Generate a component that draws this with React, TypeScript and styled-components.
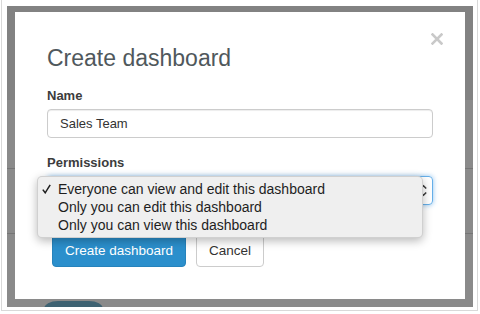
import React from 'react';
import { styled, createGlobalStyle } from 'styled-components';

const GlobalStyle = createGlobalStyle`
  html, body {
    margin: 0;
    padding: 0;
    background: #fff;
  }
  body {
    font-family: "Liberation Sans", Arial, sans-serif;
    width: 480px;
    height: 314px;
    overflow: hidden;
  }
`;

const permissionOptions = [
  'Everyone can view and edit this dashboard',
  'Only you can edit this dashboard',
  'Only you can view this dashboard',
];

function CloseIcon() {
  return (
    <svg width="12" height="12" viewBox="0 0 12 12">
      <path d="M1.5 1.5 L10.5 10.5 M10.5 1.5 L1.5 10.5" stroke="#c9c9c9" strokeWidth="2.6" strokeLinecap="square" />
    </svg>
  );
}

function CheckIcon() {
  return (
    <svg width="9" height="10" viewBox="0 0 9 10">
      <path d="M0.8 5.6 L3.2 8.8 L8.2 0.8" fill="none" stroke="#1e1e1e" strokeWidth="1.5" />
    </svg>
  );
}

function SelectArrows() {
  return (
    <svg width="7" height="13" viewBox="0 0 7 13">
      <path d="M0.8 4.6 L3.5 1.8 L6.2 4.6" fill="none" stroke="#3a3a3a" strokeWidth="1.5" />
      <path d="M0.8 8.4 L3.5 11.2 L6.2 8.4" fill="none" stroke="#3a3a3a" strokeWidth="1.5" />
    </svg>
  );
}

function App() {
  const [name, setName] = React.useState('Sales Team');
  const [permission] = React.useState(0);

  return (
    <>
      <GlobalStyle />
      <StyledFrame>
        <StyledWindow>
          {/* page behind the dialog */}
          <StyledPage>
            <StyledPageHeader />
            <StyledPageRow $height={68} />
            <StyledPageRow $height={64} />
            <StyledPageFooter>
              <StyledBlob />
            </StyledPageFooter>
          </StyledPage>

          {/* dialog */}
          <StyledBackdrop>
            <StyledModal>
              <StyledClose aria-label="Close">
                <CloseIcon />
              </StyledClose>
              <StyledTitle>Create dashboard</StyledTitle>

              <StyledFormGroup>
                <StyledLabel>Name</StyledLabel>
                <StyledInput value={name} onChange={(e) => setName(e.target.value)} />
              </StyledFormGroup>

              <StyledFormGroup>
                <StyledLabel>Permissions</StyledLabel>
                <StyledSelect>
                  <StyledSelectValue>{permissionOptions[permission]}</StyledSelectValue>
                  <SelectArrows />
                  <StyledMenu>
                    {permissionOptions.map((opt, i) => (
                      <StyledMenuItem key={opt}>
                        <StyledCheck>{i === permission && <CheckIcon />}</StyledCheck>
                        {opt}
                      </StyledMenuItem>
                    ))}
                  </StyledMenu>
                </StyledSelect>
              </StyledFormGroup>

              <StyledActions>
                <StyledBtn $primary>Create dashboard</StyledBtn>
                <StyledBtn>Cancel</StyledBtn>
              </StyledActions>
            </StyledModal>
          </StyledBackdrop>
        </StyledWindow>
      </StyledFrame>
    </>
  );
}

export default App;

// styled
const StyledFrame = styled.div`
  box-sizing: border-box;
  width: 477px;
  height: 311px;
  margin-left: 1px;
  border: 1px solid #d9d9d9;
  border-top: 0;
  padding: 6px 0 0 5px;
`;

const StyledWindow = styled.div`
  position: relative;
  width: 466px;
  height: 301px;
  overflow: hidden;
  background: #fff;
`;

const StyledPage = styled.div`
  display: flex;
  flex-direction: column;
  & > * {
    flex-shrink: 0;
  }
`;

const StyledPageHeader = styled.div`
  height: 94px;
  background: #f0f0f0;
`;

const StyledPageRow = styled.div<{ $height: number }>`
  height: ${(p) => p.$height}px;
  border-bottom: 1px solid #d8d8d8;
`;

const StyledPageFooter = styled.div`
  display: flex;
  padding: 67px 0 0 37px;
`;

const StyledBlob = styled.div`
  width: 59px;
  height: 24px;
  background: #74b5d3;
  border-radius: 14px 14px 0 0 / 8px 8px 0 0;
`;

const StyledBackdrop = styled.div`
  position: absolute;
  inset: 0;
  background: rgba(0, 0, 0, 0.46);
  padding: 6px 8px;
`;

const StyledModal = styled.div`
  position: relative;
  box-sizing: border-box;
  width: 450px;
  height: 287px;
  background: #fff;
  padding: 34px 32px 0;
`;

const StyledClose = styled.button`
  position: absolute;
  top: 21px;
  right: 22px;
  display: flex;
  padding: 0;
  border: 0;
  background: transparent;
`;

const StyledTitle = styled.h2`
  margin: 0 0 17px;
  font-size: 23px;
  font-weight: 400;
  line-height: 24px;
  color: #50585c;
`;

const StyledFormGroup = styled.div`
  & + & {
    margin-top: 16px;
  }
`;

const StyledLabel = styled.label`
  display: block;
  margin-bottom: 4px;
  font-size: 13px;
  font-weight: 700;
  line-height: 18px;
  color: #3c3c3c;
`;

const StyledInput = styled.input`
  box-sizing: border-box;
  display: block;
  width: 100%;
  height: 29px;
  padding: 0 12px;
  border: 1px solid #cccccc;
  border-radius: 4px;
  box-shadow: inset 0 1px 1px rgba(0, 0, 0, 0.075);
  font-family: "Liberation Sans", Arial, sans-serif;
  font-size: 13px;
  color: #333;
  outline: none;
`;

const StyledSelect = styled.div`
  position: relative;
  box-sizing: border-box;
  display: flex;
  align-items: center;
  justify-content: space-between;
  height: 29px;
  padding: 0 5px 0 12px;
  border: 1px solid #66afe9;
  border-radius: 4px;
  box-shadow: 0 0 5px rgba(102, 175, 233, 0.75);
  font-size: 13px;
  color: #333;
`;

const StyledSelectValue = styled.span`
  visibility: hidden;
`;

const StyledMenu = styled.div`
  position: absolute;
  z-index: 2;
  top: -1px;
  left: -11px;
  box-sizing: border-box;
  width: 386px;
  height: 62px;
  padding: 3px 0;
  background: #efefef;
  border: 1px solid rgba(0, 0, 0, 0.13);
  border-radius: 5px;
  box-shadow: 0 3px 10px rgba(0, 0, 0, 0.28);
`;

const StyledMenuItem = styled.div`
  display: flex;
  align-items: center;
  height: 18px;
  padding-left: 4px;
  font-size: 14px;
  line-height: 18px;
  color: #1e1e1e;
`;

const StyledCheck = styled.span`
  display: flex;
  align-items: center;
  width: 16px;
  height: 18px;
`;

const StyledActions = styled.div`
  display: flex;
  gap: 10px;
  margin-top: 28px;
  padding-left: 5px;
`;

const StyledBtn = styled.button<{ $primary?: boolean }>`
  height: 34px;
  padding: 0 12px;
  border-radius: 4px;
  border: 1px solid ${(p) => (p.$primary ? '#2683bc' : '#cccccc')};
  background: ${(p) => (p.$primary ? '#2b8fcc' : '#fff')};
  color: ${(p) => (p.$primary ? '#fff' : '#333')};
  font-family: "Liberation Sans", Arial, sans-serif;
  font-size: 13.5px;
`;
